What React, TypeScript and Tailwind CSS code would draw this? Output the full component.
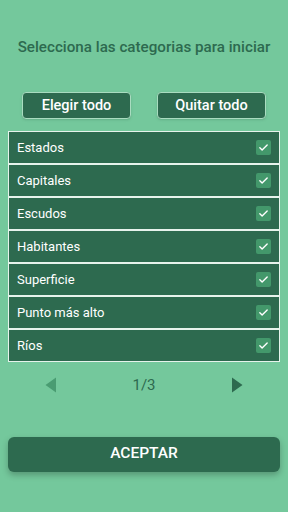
import React, { useState } from 'react';

const CATEGORIES = [
  'Estados',
  'Capitales',
  'Escudos',
  'Habitantes',
  'Superficie',
  'Punto más alto',
  'Ríos',
];

const CheckBox: React.FC<{ checked: boolean }> = ({ checked }) => (
  <span className="flex h-[15px] w-[15px] items-center justify-center rounded-[2px] bg-[#43986b]">
    {checked && (
      <svg width="11" height="11" viewBox="0 0 24 24" fill="none">
        <path d="M4 12.5l5 5L20 6.5" stroke="white" strokeWidth="3" strokeLinecap="round" strokeLinejoin="round" />
      </svg>
    )}
  </span>
);

export default function App() {
  const [checked, setChecked] = useState<boolean[]>(CATEGORIES.map(() => true));

  const toggle = (i: number) =>
    setChecked((prev) => prev.map((v, j) => (j === i ? !v : v)));

  return (
    <div className="flex h-[512px] w-[288px] flex-col bg-[#74c89c] font-['Roboto',sans-serif]">
      <h1 className="mt-[38px] text-center text-[15.2px] font-medium leading-[19px] text-[#2d6a4f]">
        Selecciona las categorias para iniciar
      </h1>

      <div className="mt-[35px] flex justify-between pl-[22px] pr-[22px]">
        <button
          className="h-[27px] w-[109px] rounded-[4px] border border-[#a9dcc0] bg-[#2d6a4f] text-[14.5px] font-medium text-white shadow-sm"
          onClick={() => setChecked(CATEGORIES.map(() => true))}
        >
          Elegir todo
        </button>
        <button
          className="h-[27px] w-[109px] rounded-[4px] border border-[#a9dcc0] bg-[#2d6a4f] text-[14.5px] font-medium text-white shadow-sm"
          onClick={() => setChecked(CATEGORIES.map(() => false))}
        >
          Quitar todo
        </button>
      </div>

      <div className="mx-[8px] mt-[12px] flex flex-col gap-[2px] border border-[#e6f3ec] bg-[#e6f3ec]">
        {CATEGORIES.map((name, i) => (
          <div
            key={name}
            onClick={() => toggle(i)}
            className="flex h-[31px] items-center justify-between bg-[#2d6a4f] pl-[8px] pr-[8px]"
          >
            <span className="text-[13px] text-white">{name}</span>
            <CheckBox checked={checked[i]} />
          </div>
        ))}
      </div>

      <div className="mt-[12px] flex items-center justify-between px-[45px]">
        <svg width="12" height="16" viewBox="0 0 12 16">
          <path d="M11 0.5V15.5L0.5 8Z" fill="#4a9c72" />
        </svg>
        <span className="text-[15px] text-[#2d6a4f]">1/3</span>
        <svg width="12" height="16" viewBox="0 0 12 16">
          <path d="M1 0.5V15.5L11.5 8Z" fill="#2d6a4f" />
        </svg>
      </div>

      <button className="mx-[8px] mt-[40px] h-[35px] rounded-[6px] bg-[#2d6a4f] text-[15.5px] font-medium text-white shadow-[0_3px_6px_rgba(0,0,0,0.25)]">
        ACEPTAR
      </button>
    </div>
  );
}
